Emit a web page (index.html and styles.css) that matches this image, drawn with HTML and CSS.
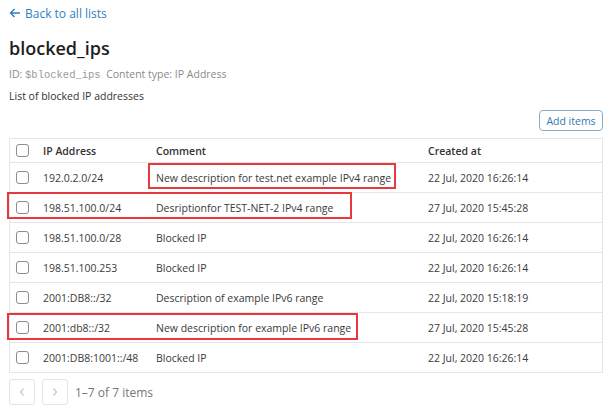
FILE: index.html
```html
<!DOCTYPE html>
<html>
<head>
<meta charset="utf-8">
<link rel="stylesheet" href="styles.css">
</head>
<body>
<div class="page">
  <a class="back" href="#"><svg class="arrow" width="12" height="10" viewBox="0 0 12 10"><path d="M11 5H1.5M5.5 1L1.5 5l4 4" fill="none" stroke="currentColor" stroke-width="1.4"/></svg><span>Back to all lists</span></a>
  <h1 class="title">blocked_ips</h1>
  <div class="meta">ID: <span class="mono">$blocked_ips</span>&nbsp; Content type: IP Address</div>
  <div class="desc">List of blocked IP addresses</div>
  <div class="toolbar"><button class="add">Add items</button></div>
  <div class="table">
    <div class="row head">
      <div class="cell"><span class="cb"></span></div>
      <div class="cell">IP Address</div>
      <div class="cell">Comment</div>
      <div class="cell">Created at</div>
    </div>
    <div class="row">
      <div class="cell"><span class="cb"></span></div>
      <div class="cell">192.0.2.0/24</div>
      <div class="cell">New description for test.net example IPv4 range</div>
      <div class="cell">22 Jul, 2020 16:26:14</div>
    </div>
    <div class="row">
      <div class="cell"><span class="cb"></span></div>
      <div class="cell">198.51.100.0/24</div>
      <div class="cell">Desriptionfor TEST-NET-2 IPv4 range</div>
      <div class="cell">27 Jul, 2020 15:45:28</div>
    </div>
    <div class="row">
      <div class="cell"><span class="cb"></span></div>
      <div class="cell">198.51.100.0/28</div>
      <div class="cell">Blocked IP</div>
      <div class="cell">22 Jul, 2020 16:26:14</div>
    </div>
    <div class="row">
      <div class="cell"><span class="cb"></span></div>
      <div class="cell">198.51.100.253</div>
      <div class="cell">Blocked IP</div>
      <div class="cell">22 Jul, 2020 16:26:14</div>
    </div>
    <div class="row">
      <div class="cell"><span class="cb"></span></div>
      <div class="cell">2001:DB8::/32</div>
      <div class="cell">Description of example IPv6 range</div>
      <div class="cell">22 Jul, 2020 15:18:19</div>
    </div>
    <div class="row">
      <div class="cell"><span class="cb"></span></div>
      <div class="cell">2001:db8::/32</div>
      <div class="cell">New description for example IPv6 range</div>
      <div class="cell">27 Jul, 2020 15:45:28</div>
    </div>
    <div class="row">
      <div class="cell"><span class="cb"></span></div>
      <div class="cell">2001:DB8:1001::/48</div>
      <div class="cell">Blocked IP</div>
      <div class="cell">22 Jul, 2020 16:26:14</div>
    </div>
    <div class="mark mark1"></div>
    <div class="mark mark2"></div>
    <div class="mark mark3"></div>
  </div>
  <div class="pager">
    <button class="pbtn"><svg width="8" height="10" viewBox="0 0 8 10"><path d="M5.5 1.5L2.5 5l3 3.5" fill="none" stroke="currentColor" stroke-width="1.1"/></svg></button>
    <button class="pbtn"><svg width="8" height="10" viewBox="0 0 8 10"><path d="M2.5 1.5L5.5 5l-3 3.5" fill="none" stroke="currentColor" stroke-width="1.1"/></svg></button>
    <span class="count">1–7 of 7 items</span>
  </div>
</div>
</body>
</html>
```

FILE: styles.css
```css
* { box-sizing: border-box; }
body {
  margin: 0;
  background: #fff;
  font-family: "Open Sans", "Noto Sans", sans-serif;
  color: #333;
}
.page {
  padding: 4px 5px 0 9px;
}
.back {
  display: flex;
  align-items: center;
  gap: 4px;
  color: #2f7fc1;
  text-decoration: none;
  font-size: 12px;
  height: 18px;
}
.arrow { display: block; }
.title {
  margin: 14px 0 0;
  font-size: 18px;
  font-weight: 600;
  line-height: 24px;
  color: #1e1e1e;
}
.meta {
  margin-top: 7px;
  font-size: 10.5px;
  color: #8a8a8a;
  line-height: 14px;
}
.mono {
  font-family: "Liberation Mono", "DejaVu Sans Mono", monospace;
  font-size: 10.5px;
  color: #999;
}
.desc {
  margin-top: 7px;
  font-size: 10.5px;
  color: #333;
  line-height: 14px;
}
.toolbar {
  display: flex;
  justify-content: flex-end;
  margin-top: 7px;
}
.add {
  font-family: inherit;
  font-size: 10.5px;
  color: #3578b0;
  background: #fff;
  border: 1px solid #86aecb;
  border-radius: 4px;
  height: 21px;
  width: 64px;
  padding: 0;
  margin: 0;
  display: block;
}
.table {
  position: relative;
  margin-top: 7px;
  border: 1px solid #e6e6e6;
  font-size: 10.5px;
  color: #3a3a3a;
}
.row {
  display: grid;
  grid-template-columns: 33px 113px 272px 1fr;
  align-items: center;
  height: 30px;
  border-top: 1px solid #e6e6e6;
}
.row.head {
  height: 23px;
  border-top: none;
  font-weight: 600;
  color: #333;
}
.cell { white-space: nowrap; }
.cb {
  display: block;
  width: 13px;
  height: 13px;
  margin-left: 6px;
  border: 1px solid #8c8c8c;
  border-radius: 3px;
}
.mark {
  position: absolute;
  border: 2px solid #e8383d;
}
.mark1 { left: 138px; top: 24px; width: 248px; height: 26px; }
.mark2 { left: -3px; top: 53px; width: 345px; height: 27px; }
.mark3 { left: -3px; top: 174px; width: 351px; height: 27px; }
.pager {
  display: flex;
  align-items: center;
  gap: 7px;
  margin-top: 6px;
}
.pbtn {
  width: 26px;
  height: 26px;
  padding: 0;
  background: #fff;
  border: 1px solid #e4e4e4;
  border-radius: 3px;
  color: #b8b8b8;
  display: flex;
  align-items: center;
  justify-content: center;
}
.count {
  font-size: 12px;
  color: #777;
}
```
